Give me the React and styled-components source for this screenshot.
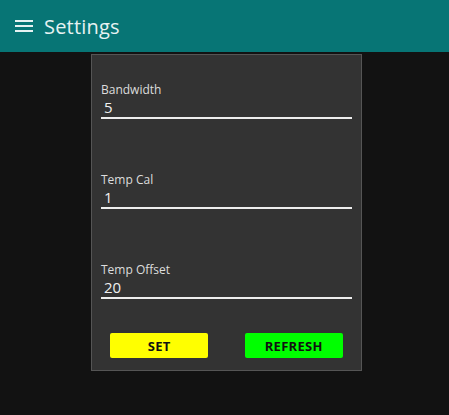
import styled, { createGlobalStyle } from 'styled-components';

const GlobalStyle = createGlobalStyle`
  *, *::before, *::after {
    box-sizing: border-box;
  }

  html, body {
    margin: 0;
    padding: 0;
    background-color: #121212;
    font-family: "Open Sans", "DejaVu Sans", sans-serif;
  }
`;

const Page = styled.div`
  min-height: 415px;
  background-color: #121212;
`;

const TopBar = styled.header`
  height: 52px;
  background-color: #077575;
  display: flex;
  align-items: center;
  padding-left: 12px;
  gap: 8px;
  color: #e6f2f2;

  svg {
    width: 24px;
    height: 24px;
    display: block;
  }
`;

const Title = styled.h1`
  margin: 0;
  font-size: 20px;
  font-weight: 400;
  letter-spacing: 0.2px;
`;

const Main = styled.main`
  display: flex;
  justify-content: center;
  padding: 2px 0 0 4px;
`;

const Card = styled.section`
  width: 271px;
  background-color: #333333;
  border: 1px solid #555555;
  padding: 28px 0 12px;
  display: flex;
  flex-direction: column;
`;

const Fields = styled.div`
  display: flex;
  flex-direction: column;
  gap: 54px;
  padding: 0 9px;
`;

const Field = styled.label`
  display: flex;
  flex-direction: column;
`;

const FieldLabel = styled.span`
  font-size: 12px;
  line-height: 14px;
  color: #dddddd;
`;

const FieldInput = styled.input`
  width: 100%;
  height: 22px;
  padding: 0 0 1px 3px;
  margin: 0;
  border: none;
  border-bottom: 2px solid #eeeeee;
  background: transparent;
  color: #f0f0f0;
  font-family: inherit;
  font-size: 15px;
  line-height: 19px;
  outline: none;
`;

const Actions = styled.div`
  display: flex;
  justify-content: space-around;
  margin-top: 34px;
`;

const Button = styled.button`
  width: 98px;
  height: 25px;
  border: none;
  border-radius: 2px;
  background-color: ${props => props.color};
  color: #111111;
  font-family: inherit;
  font-size: 13px;
  font-weight: 700;
  letter-spacing: 0.3px;
  cursor: pointer;
`;

const fields = [
  { label: 'Bandwidth', value: '5' },
  { label: 'Temp Cal', value: '1' },
  { label: 'Temp Offset', value: '20' },
];

export default function App() {
  return (
    <Page>
      <GlobalStyle />
      <TopBar>
        <svg viewBox="0 0 24 24" fill="currentColor">
          <path d="M3 18h18v-2H3v2zm0-5h18v-2H3v2zm0-7v2h18V6H3z" />
        </svg>
        <Title>Settings</Title>
      </TopBar>
      <Main>
        <Card>
          <Fields>
            {fields.map(f => (
              <Field key={f.label}>
                <FieldLabel>{f.label}</FieldLabel>
                <FieldInput defaultValue={f.value} />
              </Field>
            ))}
          </Fields>
          <Actions>
            <Button color="#ffff00">SET</Button>
            <Button color="#00ff00">REFRESH</Button>
          </Actions>
        </Card>
      </Main>
    </Page>
  );
}
